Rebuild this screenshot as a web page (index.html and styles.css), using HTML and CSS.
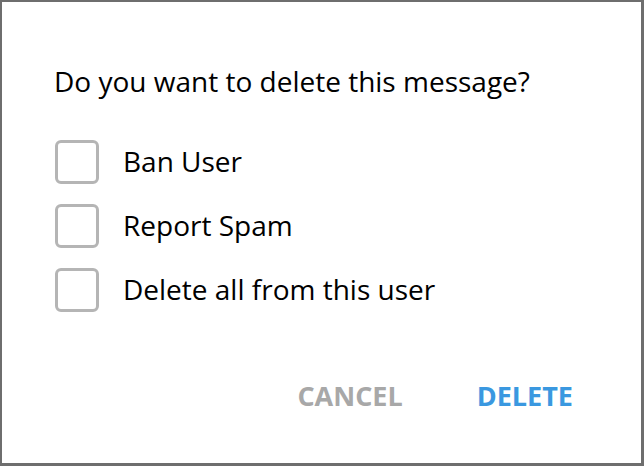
FILE: index.html
```
<!DOCTYPE html>
<html>
<head>
<meta charset="utf-8">
<link rel="stylesheet" href="styles.css">
</head>
<body>
<div class="backdrop">
  <div class="dialog">
    <div class="title">Do you want to delete this message?</div>
    <div class="options">
      <label class="option"><span class="box"></span><span class="label">Ban User</span></label>
      <label class="option"><span class="box"></span><span class="label">Report Spam</span></label>
      <label class="option"><span class="box"></span><span class="label">Delete all from this user</span></label>
    </div>
    <div class="actions">
      <button class="btn cancel">CANCEL</button>
      <button class="btn delete">DELETE</button>
    </div>
  </div>
</div>
</body>
</html>
```
FILE: styles.css
```
html, body {
  margin: 0;
  padding: 0;
  background: #6e6e6e;
}
.backdrop {
  width: 644px;
  height: 466px;
  padding: 2px 3px 3px 2px;
  box-sizing: border-box;
}
.dialog {
  background: #fff;
  height: 100%;
  box-sizing: border-box;
  padding: 61px 68px 0 53px;
  font-family: "Open Sans", "Liberation Sans", sans-serif;
  color: #000;
  display: flex;
  flex-direction: column;
}
.title {
  font-size: 28px;
  line-height: 36px;
  margin-left: -1px;
}
.options {
  margin-top: 41px;
  display: flex;
  flex-direction: column;
  gap: 20px;
}
.option {
  display: flex;
  align-items: center;
  gap: 24px;
  height: 44px;
}
.box {
  width: 44px;
  height: 44px;
  box-sizing: border-box;
  border: 3px solid #b5b5b5;
  border-radius: 6px;
}
.label {
  font-size: 28px;
  line-height: 36px;
  margin-bottom: 2px;
}
.actions {
  margin-top: 66px;
  display: flex;
  justify-content: flex-end;
  gap: 74px;
}
.btn {
  border: 0;
  background: none;
  padding: 0;
  font-family: "Open Sans", "Liberation Sans", sans-serif;
  font-weight: 700;
  font-size: 27px;
  line-height: 36px;
}
.cancel { color: #a8a8a8; }
.delete { color: #3a98e0; }
```
